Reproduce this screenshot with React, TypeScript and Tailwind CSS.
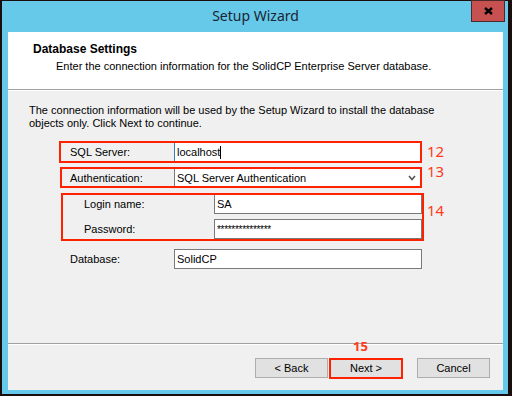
import React from "react";

const ui = { fontFamily: '"Liberation Sans", Arial, sans-serif' };
const seg = { fontFamily: '"Noto Sans", "Open Sans", sans-serif' };

export default function App() {
  return (
    <div className="relative w-[512px] h-[396px] bg-[#1a0d0d] pt-px pl-[2px] pr-[4px] pb-[2px]" style={ui}>
      <div className="h-full bg-[#66c9ea] flex flex-col pl-[6px] pr-[5px] pb-[4px]">
        {/* title bar */}
        <div className="h-[31px] grid grid-cols-[1fr_auto_1fr] items-start">
          <div />
          <div className="pt-[6px] text-[14px] leading-[18px] text-[#1b2533]" style={seg}>Setup Wizard</div>
          <div className="flex justify-end -mt-px -mr-[2px]">
            <div className="w-[34px] h-[22px] bg-[#c75050] border border-[#4a2a2a] flex items-center justify-center">
              <svg width="9" height="8" viewBox="0 0 9 8">
                <path d="M1 1 L8 7 M8 1 L1 7" stroke="#000" strokeWidth="2.4" />
              </svg>
            </div>
          </div>
        </div>
        {/* client */}
        <div className="flex-1 flex flex-col bg-[#f0f0f0]">
          <div className="h-[58px] bg-white border-b border-[#a0a0a0] pl-[25px] pt-[10px]">
            <div className="text-[12px] leading-[14px] font-bold text-black">Database Settings</div>
            <div className="mt-[4px] ml-[23px] text-[11px] leading-[13px] text-black">
              Enter the connection information for the SolidCP Enterprise Server database.
            </div>
          </div>
          <div className="flex-1 flex flex-col border-t border-white">
            <div className="mt-[13px] pl-[21px] text-[11px] leading-[13px] text-black">
              The connection information will be used by the Setup Wizard to install the database
              <br />
              objects only. Click Next to continue.
            </div>
            <div className="mt-[12px] flex flex-col text-[11px] text-black">
              <div className="flex items-center h-[20px]">
                <div className="w-[166px] pl-[62px]">SQL Server:</div>
                <div className="w-[248px] h-[20px] bg-white border border-[#3c7fb1] flex items-center pl-[2px]">
                  <span>localhost</span>
                  <span className="w-px h-[13px] bg-black" />
                </div>
              </div>
              <div className="flex items-center h-[20px] mt-[6px]">
                <div className="w-[166px] pl-[62px]">Authentication:</div>
                <div className="w-[248px] h-[20px] bg-white border border-[#7a7a7a] flex items-center justify-between pl-[2px] pr-[5px]">
                  <span>SQL Server Authentication</span>
                  <svg width="8" height="6" viewBox="0 0 8 6">
                    <path d="M1 1 L4 4.5 L7 1" stroke="#555" strokeWidth="1.6" fill="none" />
                  </svg>
                </div>
              </div>
              <div className="flex items-center h-[20px] mt-[6px]">
                <div className="w-[206px] pl-[76px]">Login name:</div>
                <div className="w-[208px] h-[20px] bg-white border border-[#7a7a7a] flex items-center pl-[2px]">SA</div>
              </div>
              <div className="flex items-center h-[20px] mt-[5px]">
                <div className="w-[206px] pl-[76px]">Password:</div>
                <div className="w-[208px] h-[20px] bg-white border border-[#7a7a7a] flex items-center pl-[2px] tracking-[-0.3px] text-[10px]">***************</div>
              </div>
              <div className="flex items-center h-[20px] mt-[10px]">
                <div className="w-[166px] pl-[62px]">Database:</div>
                <div className="w-[248px] h-[20px] bg-white border border-[#7a7a7a] flex items-center pl-[2px]">SolidCP</div>
              </div>
            </div>
            <div className="flex-1" />
            <div className="border-t border-[#a0a0a0]">
              <div className="h-[46px] border-t border-white flex justify-end items-start pt-[13px] pr-[13px] text-[11px] text-black">
                <button className="w-[73px] h-[20px] bg-[#e1e1e1] border border-[#adadad]">&lt; Back</button>
                <button className="ml-[1px] w-[74px] h-[21px] bg-[#e1e1e1] border-2 border-[#ff2200]">Next &gt;</button>
                <button className="ml-[14px] w-[73px] h-[20px] bg-[#e1e1e1] border border-[#adadad]">Cancel</button>
              </div>
            </div>
          </div>
        </div>
      </div>
      {/* annotations */}
      <div className="absolute left-[59px] top-[141px] w-[363px] h-[22px] border-2 border-[#ff2200]" />
      <div className="absolute left-[60px] top-[167px] w-[362px] h-[21px] border-2 border-[#ff2200]" />
      <div className="absolute left-[61px] top-[193px] w-[363px] h-[48px] border-2 border-[#ff2200]" />
      <div className="absolute left-[427px] top-[144px] text-[15px] leading-[15px] text-[#ff3a1a]" style={seg}>12</div>
      <div className="absolute left-[427px] top-[164px] text-[15px] leading-[15px] text-[#ff3a1a]" style={seg}>13</div>
      <div className="absolute left-[427px] top-[203px] text-[15px] leading-[15px] text-[#ff3a1a]" style={seg}>14</div>
      <div className="absolute left-[353px] top-[340px] text-[13px] leading-[13px] font-bold text-[#ff3a1a]" style={seg}>15</div>
    </div>
  );
}
